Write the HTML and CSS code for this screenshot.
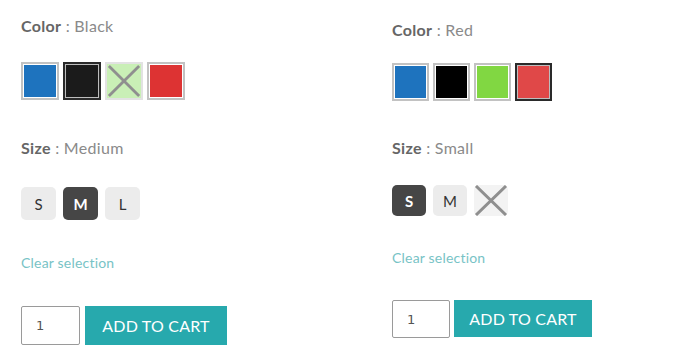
FILE: index.html
```html
<!DOCTYPE html>
<html lang="en">
<head>
  <meta charset="UTF-8">
  <title>Variation swatches</title>
  <link rel="stylesheet" href="styles.css">
</head>
<body>

<div class="products">

  <div class="product">
    <div class="attr-label"><b>Color</b> : Black</div>
    <div class="swatches">
      <span class="swatch" style="background:#1e73be"></span>
      <span class="swatch selected" style="background:#1b1b1b"></span>
      <span class="swatch disabled" style="background:#c9efb6">
        <svg viewBox="0 0 36 36"><path d="M2 2L34 34M34 2L2 34"/></svg>
      </span>
      <span class="swatch" style="background:#dd3333"></span>
    </div>

    <div class="attr-label size-label"><b>Size</b> : Medium</div>
    <div class="sizes">
      <span class="size">S</span>
      <span class="size selected">M</span>
      <span class="size">L</span>
    </div>

    <a class="clear" href="#">Clear selection</a>

    <div class="cart">
      <input class="qty" type="text" value="1">
      <button class="add">ADD TO CART</button>
    </div>
  </div>

  <div class="product second">
    <div class="attr-label"><b>Color</b> : Red</div>
    <div class="swatches">
      <span class="swatch" style="background:#1e73be"></span>
      <span class="swatch" style="background:#000000"></span>
      <span class="swatch" style="background:#81d742"></span>
      <span class="swatch selected" style="background:#e04848"></span>
    </div>

    <div class="attr-label size-label"><b>Size</b> : Small</div>
    <div class="sizes">
      <span class="size selected">S</span>
      <span class="size">M</span>
      <span class="size disabled">
        <svg viewBox="0 0 34 31"><path d="M2 1L32 30M32 1L2 30"/></svg>
      </span>
    </div>

    <a class="clear" href="#">Clear selection</a>

    <div class="cart">
      <input class="qty" type="text" value="1">
      <button class="add">ADD TO CART</button>
    </div>
  </div>

</div>

</body>
</html>
```

FILE: styles.css
```css
body {
  margin: 0;
  background: #fff;
  font-family: Lato, "Open Sans", sans-serif;
  color: #888;
}
.products {
  display: grid;
  grid-template-columns: 371px 1fr;
  padding-left: 21px;
}
.product {
  display: flex;
  flex-direction: column;
  align-items: flex-start;
  padding-top: 16px;
}
.product.second {
  padding-top: 20px;
}
.attr-label {
  font-size: 16px;
  line-height: 20px;
  letter-spacing: 0.3px;
  color: #8a8a8a;
}
.attr-label b {
  color: #666;
  font-weight: bold;
}
.swatches {
  display: flex;
  gap: 4px;
  margin-top: 26px;
}
.second .swatches {
  margin-top: 23px;
}
.swatch {
  display: block;
  width: 38px;
  height: 38px;
  box-sizing: border-box;
  border: 2px solid #c2c2c2;
  box-shadow: inset 0 0 0 1px #fff;
}
.second .swatch {
  width: 37px;
}
.swatch.selected {
  border-color: #2a2a2a;
  box-shadow: inset 0 0 0 1px #bdbdbd;
}
.swatch.disabled {
  border-color: #e2e2e2;
  box-shadow: none;
}
.swatch svg, .size svg {
  display: block;
  width: 100%;
  height: 100%;
}
.swatch svg path, .size svg path {
  stroke: #8f8f8f;
  stroke-width: 3;
  fill: none;
}
.size-label {
  margin-top: 38px;
}
.second .size-label {
  margin-top: 37px;
}
.sizes {
  display: flex;
  gap: 7px;
  margin-top: 29px;
}
.second .sizes {
  margin-top: 27px;
}
.size {
  width: 35px;
  height: 33px;
  border-radius: 5px;
  background: #ececec;
  color: #333;
  font-size: 15px;
  display: flex;
  align-items: center;
  justify-content: center;
}
.second .size {
  width: 34px;
  height: 31px;
}
.size.selected {
  background: #464646;
  color: #fff;
  font-weight: bold;
}
.size.disabled {
  background: #f3f3f3;
}
.clear {
  margin-top: 34px;
  font-size: 14px;
  line-height: 17px;
  letter-spacing: 0.2px;
  color: #78c3c6;
  text-decoration: none;
}
.second .clear {
  margin-top: 33px;
}
.cart {
  display: flex;
  gap: 5px;
  margin-top: 35px;
}
.second .cart {
  margin-top: 34px;
}
.qty {
  width: 59px;
  height: 39px;
  box-sizing: border-box;
  border: 1px solid #9a9a9a;
  border-radius: 2px;
  padding: 0 0 0 14px;
  font-family: "DejaVu Sans", sans-serif;
  font-size: 13px;
  color: #555;
}
.second .qty {
  width: 58px;
  height: 38px;
  margin-right: -1px;
}
.add {
  width: 142px;
  height: 39px;
  border: none;
  background: #27a9ad;
  color: #fff;
  font-family: Lato, "Open Sans", sans-serif;
  font-size: 16px;
  letter-spacing: 0.2px;
  padding: 0;
}
.second .add {
  width: 138px;
  height: 37px;
}
```
